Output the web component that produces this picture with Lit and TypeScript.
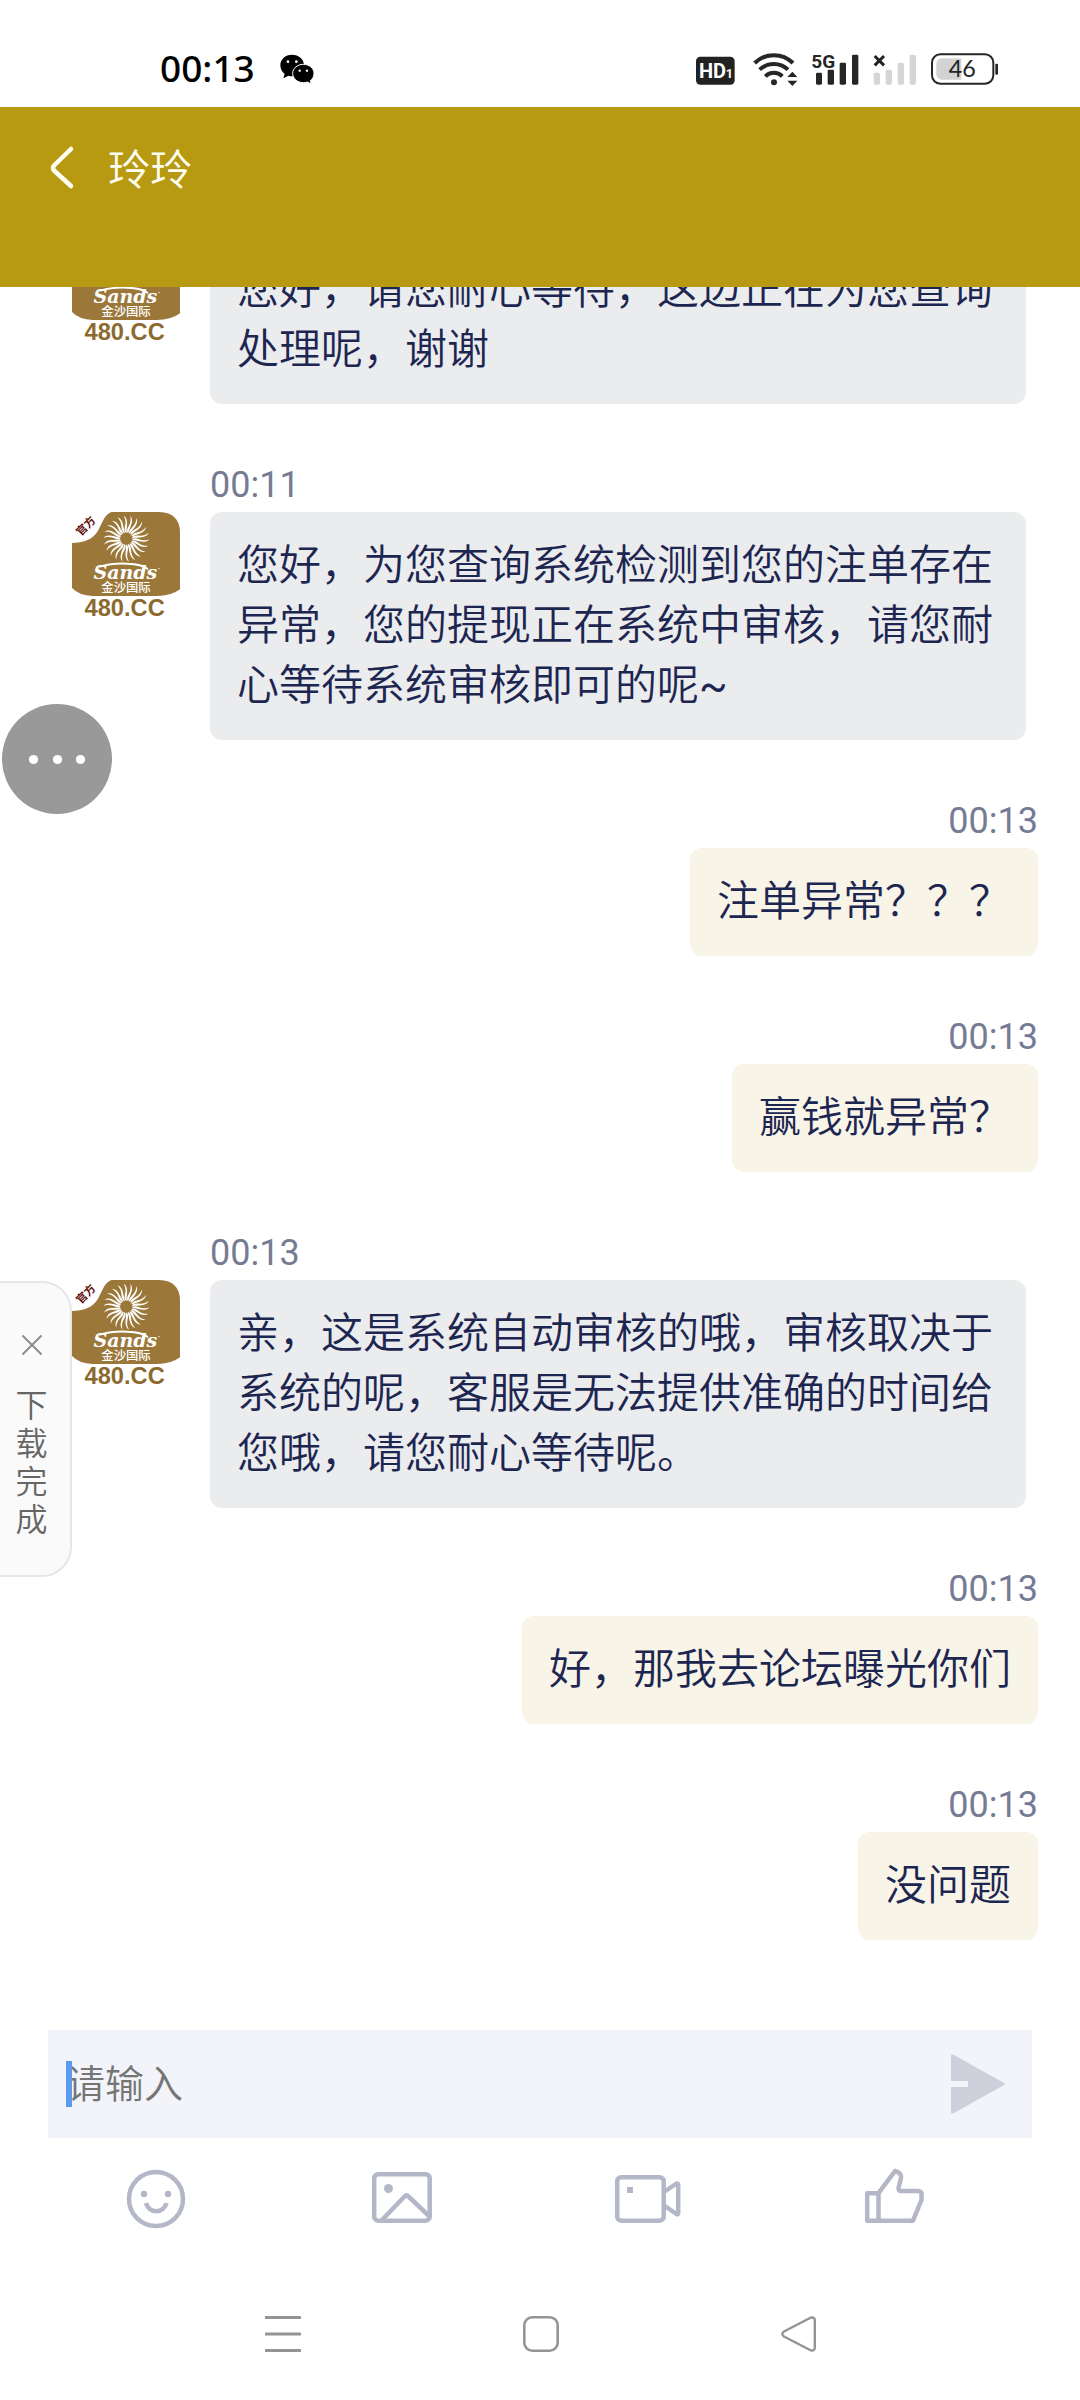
import { LitElement, html, css, svg } from "lit";
import { customElement, property } from "lit/decorators.js";

interface Message {
  time: string;
  text: string;
  mine: boolean;
}

const MESSAGES: Message[] = [
  { time: "00:11", mine: false, text: "您好，请您耐心等待，这边正在为您查询处理呢，谢谢" },
  { time: "00:11", mine: false, text: "您好，为您查询系统检测到您的注单存在异常，您的提现正在系统中审核，请您耐心等待系统审核即可的呢~" },
  { time: "00:13", mine: true, text: "注单异常？？？" },
  { time: "00:13", mine: true, text: "赢钱就异常？" },
  { time: "00:13", mine: false, text: "亲，这是系统自动审核的哦，审核取决于系统的呢，客服是无法提供准确的时间给您哦，请您耐心等待呢。" },
  { time: "00:13", mine: true, text: "好，那我去论坛曝光你们" },
  { time: "00:13", mine: true, text: "没问题" },
];

const RAY_COUNT = 22;

@customElement("status-bar")
class StatusBar extends LitElement {
  static styles = css`
    :host {
      display: flex;
      align-items: center;
      box-sizing: border-box;
      height: 107px;
      padding: 30px 81px 0 160px;
      color: #000;
      background: #fff;
    }
    .clock {
      padding-bottom: 2px;
      font: 500 37px/44px "Noto Sans", Roboto, sans-serif;
    }
    .chat-icon {
      width: 34px;
      height: 30px;
      margin-left: 25px;
    }
    .tray {
      display: flex;
      gap: 14px;
      margin-left: auto;
    }
    .tray svg {
      display: block;
      height: 36px;
    }
    .hd { width: 39px; margin-right: 4px; }
    .wifi { width: 45px; }
    .sim1 { width: 47px; }
    .sim2 { width: 44px; }
    .battery { width: 68px; }
    .label { font-family: Roboto, "Liberation Sans", sans-serif; }
  `;

  render() {
    return html`
      <span class="clock">00:13</span>
      <svg class="chat-icon" viewBox="0 0 102 90" aria-hidden="true">
        <path d="M36 2C16 2 1 16 1 34c0 11 5 20 13 26l-4 13 15-8c4 1 8 2 12 2 19 0 35-14 35-33S56 2 36 2Z" />
        <path d="M70 31C52 31 38 43 38 58s14 28 32 28c4 0 8-1 12-2l12 6-3-10c7-5 11-13 11-22 0-15-14-27-32-27Z" stroke="#fff" stroke-width="3" />
        <g fill="#fff">
          <circle cx="24" cy="23" r="4" /><circle cx="49" cy="23" r="4" />
          <circle cx="59" cy="50" r="3.5" /><circle cx="81" cy="50" r="3.5" />
        </g>
      </svg>
      <div class="tray">
        <svg class="hd" viewBox="110 61 117 108" aria-label="HD1">
          <rect x="110" y="78" width="116" height="84" rx="13" fill="#222" />
          <text class="label" x="119" y="141" font-size="60" font-weight="700" fill="#fff">HD</text>
          <text class="label" x="199" y="141" font-size="38" font-weight="700" fill="#fff">1</text>
        </svg>
        <svg class="wifi" viewBox="281 61 135 108" aria-label="Wi-Fi" fill="none" stroke="#262626" stroke-width="12">
          <path d="M286 97a82 82 0 0 1 115 0" />
          <path d="M301 117a61 61 0 0 1 85 0" />
          <path d="M318 137a36 36 0 0 1 51 0" />
          <circle cx="344" cy="155" r="9" fill="#262626" stroke="none" />
          <path d="M384 139l15-16 15 16zM384 150l15 16 15-16z" fill="#262626" stroke="none" />
        </svg>
        <svg class="sim1" viewBox="455 61 141 108" aria-label="5G" fill="#262626">
          <rect x="467" y="126" width="18" height="36" rx="4" />
          <rect x="502" y="117" width="19" height="45" rx="4" />
          <rect x="538" y="96" width="19" height="66" rx="4" />
          <rect x="575" y="72" width="19" height="90" rx="4" />
          <text class="label" x="453" y="111" font-size="57" font-weight="700">5G</text>
        </svg>
        <svg class="sim2" viewBox="638 61 132 108" aria-hidden="true" fill="#d5d5d5">
          <rect x="640" y="126" width="19" height="36" rx="5" />
          <rect x="676" y="117" width="19" height="45" rx="5" />
          <rect x="712" y="96" width="19" height="66" rx="5" />
          <rect x="748" y="72" width="19" height="90" rx="5" />
          <path d="M643 76l28 28M671 76l-28 28" stroke="#222" stroke-width="9" />
        </svg>
        <svg class="battery" viewBox="812 61 204 108" aria-label="46%">
          <rect x="815" y="71" width="184" height="88" rx="25" fill="#fff" stroke="#262626" stroke-width="6" />
          <path d="M903 83h-58a17 17 0 0 0-17 17v30a17 17 0 0 0 17 17h58z" fill="#d3d3d3" />
          <rect x="1005" y="99" width="8" height="33" rx="3" fill="#262626" />
          <text x="906" y="140" font-size="70" text-anchor="middle" fill="#222" font-family="Lato, sans-serif">46</text>
        </svg>
      </div>
    `;
  }
}

@customElement("brand-avatar")
class BrandAvatar extends LitElement {
  static styles = css`
    :host { display: block; }
    .art { display: block; width: 100%; }
    .wordmark { font: italic 700 57px "DejaVu Serif", serif; }
    .name { font: 500 37px "Noto Sans CJK SC", sans-serif; }
    .site { font: 700 71px "Liberation Sans", sans-serif; }
    .badge { font: 700 33px "Noto Sans CJK SC", sans-serif; }
  `;

  render() {
    const rays = Array.from(
      { length: RAY_COUNT },
      (_, i) => svg`<path
        transform="rotate(${(i * 360) / RAY_COUNT})"
        d="M-2-18C-12-32 6-44-8-69C9-57 0-38 1-18Z" />`,
    );
    return html`
      <svg class="art" viewBox="0 0 324 324" role="img" aria-label="Sands 金沙国际 480.CC">
        <path fill="#9b783a" d="M118 0H262Q324 2 324 62V232Q298 252 254 252H62Q22 251 0 228V93C32 92 62 84 78 56C92 30 98 8 118 0Z" />
        <g transform="translate(163 80)" fill="#fff">
          ${rays}
          <circle r="17" fill="#9b783a" />
        </g>
        <path fill="none" stroke="#fff" stroke-width="6" stroke-linecap="round" d="M84 164C130 150 206 152 226 170" />
        <text class="wordmark" x="160" y="200" text-anchor="middle" fill="#fff">Sands</text>
        <circle cx="261" cy="169" r="2" fill="#fff" />
        <text class="name" x="162" y="241" text-anchor="middle" fill="#fff">金沙国际</text>
        <text class="site" x="158" y="313" text-anchor="middle" fill="#8c6a2f">480.CC</text>
        <text class="badge" transform="translate(41 42) rotate(-45)" y="12" text-anchor="middle" fill="#5e1010">官方</text>
      </svg>
    `;
  }
}

@customElement("chat-message")
class ChatMessage extends LitElement {
  @property({ attribute: false }) message!: Message;

  static styles = css`
    :host { display: block; }
    .row {
      display: grid;
      grid-template-columns: 108px minmax(0, 1fr);
      column-gap: 30px;
      justify-items: start;
      padding-right: 12px;
    }
    .row.mine {
      padding-right: 0;
      justify-items: end;
    }
    .time {
      grid-column: 2;
      font-size: 36px;
      line-height: 54px;
      color: #767b94;
    }
    .avatar { grid-column: 1; width: 108px; }
    .bubble {
      grid-column: 2;
      margin: 0;
      padding: 24px 27px;
      border-radius: 12px;
      background: #ebecee;
      font-size: 42px;
      line-height: 60px;
      color: #1d2650;
    }
    .mine .bubble { background: #f8f4e8; }
  `;

  render() {
    const { time, text, mine } = this.message;
    return html`
      <div class="row ${mine ? "mine" : ""}">
        <time class="time">${time}</time>
        ${mine ? null : html`<brand-avatar class="avatar"></brand-avatar>`}
        <p class="bubble">${text}</p>
      </div>
    `;
  }
}

@customElement("app-root")
class AppRoot extends LitElement {
  static styles = css`
    :host {
      display: block;
      font-family: Roboto, "Noto Sans CJK SC DemiLight", "Noto Sans CJK SC", sans-serif;
    }
    .page {
      position: relative;
      display: flex;
      flex-direction: column;
      height: 100vh;
      overflow: hidden;
      background: #fff;
    }
    button {
      display: grid;
      place-items: center;
      margin: 0;
      padding: 0;
      border: 0;
      background: none;
      font: inherit;
      color: inherit;
    }
    svg { display: block; }
    .header {
      display: flex;
      align-items: center;
      gap: 24px;
      padding: 0 40px 60px;
      background: #b89912;
      color: #fffef4;
    }
    .back { width: 44px; height: 120px; }
    .title {
      margin: 0;
      padding-top: 8px;
      font-size: 42px;
      font-weight: 400;
      line-height: 60px;
    }
    .chat {
      display: flex;
      flex: 1;
      flex-direction: column;
      justify-content: flex-end;
      gap: 54px;
      min-height: 0;
      overflow: hidden;
      padding: 0 42px 90px 72px;
    }
    .composer {
      position: relative;
      display: flex;
      align-items: center;
      height: 108px;
      margin: 0 48px;
      background: #f2f4f9;
    }
    .entry {
      flex: 1;
      min-width: 0;
      height: 100%;
      box-sizing: border-box;
      padding: 2px 18px 0;
      border: 0;
      outline: 0;
      background: none;
      font-family: inherit;
      font-size: 39px;
      line-height: 60px;
      color: #1d2650;
    }
    .entry::placeholder { color: #757575; opacity: 1; }
    .caret {
      position: absolute;
      left: 18px;
      top: 31px;
      width: 6px;
      height: 46px;
      background: #5a9bef;
    }
    .send { width: 108px; height: 108px; color: #cdcfda; }
    .tools {
      display: grid;
      grid-template-columns: repeat(4, 1fr);
      height: 130px;
      box-sizing: border-box;
      padding: 24px 63px 0 33px;
      justify-items: center;
      align-items: start;
      color: #b4b7c7;
    }
    .nav {
      display: grid;
      grid-template-columns: repeat(3, 258px);
      justify-content: center;
      height: 132px;
      padding-left: 2px;
      color: #949494;
    }
    .more {
      position: absolute;
      left: 2px;
      top: 704px;
      width: 110px;
      height: 110px;
      border-radius: 50%;
      background: #999;
    }
    .download {
      position: absolute;
      left: -2px;
      top: 1281px;
      box-sizing: border-box;
      width: 74px;
      padding: 50px 22px 36px 15px;
      display: flex;
      flex-direction: column;
      align-items: center;
      gap: 30px;
      border: 2px solid #e6e6e6;
      border-radius: 0 30px 30px 0;
      background: #fafafa;
      color: #666;
      font-size: 32px;
      line-height: 38px;
      text-align: center;
    }
    .download-label { width: 32px; word-break: break-all; }
  `;

  private send(event: Event) {
    event.preventDefault();
  }

  render() {
    return html`
      <div class="page" lang="zh-CN">
        <status-bar></status-bar>
        <header class="header">
          <button class="back" aria-label="返回">
            <svg width="44" height="60" viewBox="0 0 44 60" fill="none" stroke="currentColor" stroke-width="4.5" stroke-linecap="round" stroke-linejoin="round">
              <path d="M31 12L14 28.500Q12 31 14 33.500L31 49" />
            </svg>
          </button>
          <h1 class="title">玲玲</h1>
        </header>

        <main class="chat">
          ${MESSAGES.map((m) => html`<chat-message .message=${m}></chat-message>`)}
        </main>

        <form class="composer" @submit=${this.send}>
          <input class="entry" type="text" aria-label="请输入" placeholder="请输入" />
          <span class="caret"></span>
          <button class="send" aria-label="发送">
            <svg width="54" height="60" viewBox="0 0 54 60" fill="currentColor">
              <path d="M0 1.500Q.3 0 2 .6L53 29Q54.500 30 53 31L2 59.400Q.3 60 0 58.500V33H17V27H0Z" />
            </svg>
          </button>
        </form>

        <div class="tools">
          <button aria-label="表情">
            <svg width="72" height="72" viewBox="0 0 72 72" fill="none" stroke="currentColor" stroke-width="4.500">
              <circle cx="36" cy="37" r="27" />
              <path d="M26 41a10.500 10.500 0 0 0 20.500 0" />
              <g fill="currentColor" stroke="none"><circle cx="24" cy="32" r="3.200" /><circle cx="48" cy="32" r="3.200" /></g>
            </svg>
          </button>
          <button aria-label="图片">
            <svg width="72" height="72" viewBox="0 0 72 72" fill="none" stroke="currentColor" stroke-width="4.500" stroke-linejoin="round">
              <rect x="8.200" y="12.200" width="55.500" height="46.500" rx="4" />
              <path d="M16 58L38.500 34.500Q40.500 32.500 42.500 34.500L63 54" />
              <circle cx="22.500" cy="26.500" r="4.500" fill="currentColor" stroke="none" />
            </svg>
          </button>
          <button aria-label="视频">
            <svg width="72" height="72" viewBox="0 0 72 72" fill="none" stroke="currentColor" stroke-width="4.500" stroke-linejoin="round">
              <rect x="5.200" y="15.200" width="46.500" height="43.500" rx="4" />
              <path d="M52 30L64.500 21.500Q66.200 21 66.200 23V51Q66.200 53 64.500 52L52 43.500" />
              <path d="M15 25h6v6h-6z" fill="currentColor" stroke="none" />
            </svg>
          </button>
          <button aria-label="点赞">
            <svg width="72" height="72" viewBox="0 0 72 72" fill="none" stroke="currentColor" stroke-width="4.500" stroke-linejoin="round">
              <path d="M9.200 31.200H20.500V58.700H9.200ZM20.500 31.200L37 9Q44 11 43 16L40.500 26Q40.500 29 43.500 29H60Q64 29 63.500 33V38L55 58.700H20.500" />
            </svg>
          </button>
        </div>

        <nav class="nav">
          <button aria-label="最近任务">
            <svg width="36" height="36" viewBox="0 0 36 36" stroke="currentColor" stroke-width="3" stroke-linecap="round">
              <path d="M1 1.500H35M1 18H35M1 34.500H35" />
            </svg>
          </button>
          <button aria-label="主屏幕">
            <svg width="36" height="36" viewBox="0 0 36 36" fill="none" stroke="currentColor" stroke-width="2.600">
              <rect x="1.300" y="1.300" width="33.400" height="33.400" rx="8" />
            </svg>
          </button>
          <button aria-label="后退">
            <svg width="36" height="36" viewBox="0 0 36 36" fill="none" stroke="currentColor" stroke-width="2.400" stroke-linejoin="round">
              <path d="M2.500 15.800L29.500 1.700Q33.500.8 33.800 4V32Q33.500 35.200 29.500 34.300L2.500 20.200Q.2 18 2.500 15.800Z" />
            </svg>
          </button>
        </nav>

        <button class="more" aria-label="更多">
          <svg width="110" height="110" viewBox="0 0 110 110" fill="#fff">
            <circle cx="31.500" cy="55.500" r="4.600" /><circle cx="55.500" cy="55.500" r="4.600" /><circle cx="78.500" cy="55.500" r="4.600" />
          </svg>
        </button>

        <aside class="download">
          <button aria-label="关闭">
            <svg width="24" height="24" viewBox="0 0 24 24" stroke="#8c8c8c" stroke-width="2" fill="none">
              <path d="M2.500 2.500l19 19M21.500 2.500l-19 19" />
            </svg>
          </button>
          <span class="download-label">下载完成</span>
        </aside>
      </div>
    `;
  }
}
